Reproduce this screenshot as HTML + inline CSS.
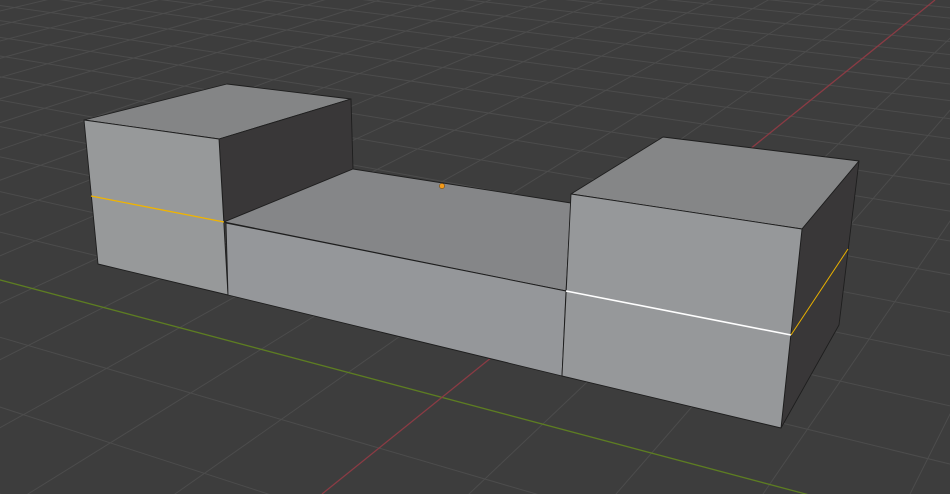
<!DOCTYPE html>
<html><head><meta charset="utf-8"><style>
html,body{margin:0;padding:0;background:#3d3d3d;overflow:hidden;width:950px;height:494px}
svg{display:block;overflow:hidden}
</style></head><body>
<svg id="s" width="950" height="494" viewBox="0 0 950 494" xmlns="http://www.w3.org/2000/svg">
<rect width="950" height="494" fill="#3d3d3d"/>
<g id="grid" stroke="#4c4c4c" stroke-width="1" fill="none"></g>
<line x1="-10" y1="277.3" x2="960" y2="535" stroke="#5d7d22" stroke-width="1.3"/>
<line x1="935" y1="0" x2="322" y2="494" stroke="#8a3b44" stroke-width="1.3"/>
<g stroke="#1e1e1e" stroke-width="0.9" stroke-linejoin="round">
<polygon points="84,120 227,84 351,99 219,139" fill="#848586"/>
<polygon points="219,139 351,99 353,169 224,222" fill="#393738"/>
<polygon points="84,120 219,139 228,295 98,264" fill="#97999a"/>
<polygon points="224,222 353,169 571,203 566,291" fill="#858688"/>
<polygon points="226,223 566,291 562,376 228,295" fill="#95979a"/>
<polygon points="571,194 663,137 859,161 802,229" fill="#858687"/>
<polygon points="802,229 859,161 839,325 781,428" fill="#393738"/>
<polygon points="571,194 802,229 781,428 562,376" fill="#96989a"/>
</g>
<line x1="91" y1="196" x2="224" y2="222" stroke="#f0b400" stroke-width="1.3"/>
<line x1="566" y1="291" x2="791" y2="335" stroke="#ffffff" stroke-width="1.6"/>
<line x1="791" y1="335" x2="848" y2="249" stroke="#e8b000" stroke-width="1"/>
<circle cx="442" cy="186" r="2.6" fill="#f39a1a" stroke="#6a3a00" stroke-width="0.5"/>
</svg>
<script>
(function(){
var g=document.getElementById('grid');
var O=[441.7,397.5],VG=[-2180,-300],VR=[1307,-300];
var kG=27,kR=14.8;
function pt(V,k,u){var f=1/(1-u/k);return [V[0]+(O[0]-V[0])*f,V[1]+(O[1]-V[1])*f];}
function line(P,V){
 var dx=P[0]-V[0],dy=P[1]-V[1],L=Math.hypot(dx,dy);dx/=L;dy/=L;
 var b=[P[0]+dx*3000,P[1]+dy*3000];
 var l=document.createElementNS('http://www.w3.org/2000/svg','line');
 l.setAttribute('x1',V[0]);l.setAttribute('y1',V[1]);l.setAttribute('x2',b[0]);l.setAttribute('y2',b[1]);
 g.appendChild(l);
}
var u;
for(u=-120;u<kG-0.5;u++){ if(u===0)continue; line(pt(VG,kG,u),VR);}
for(u=-120;u<kR-0.5;u++){ if(u===0)continue; line(pt(VR,kR,u),VG);}
})();
</script>
</body></html>
